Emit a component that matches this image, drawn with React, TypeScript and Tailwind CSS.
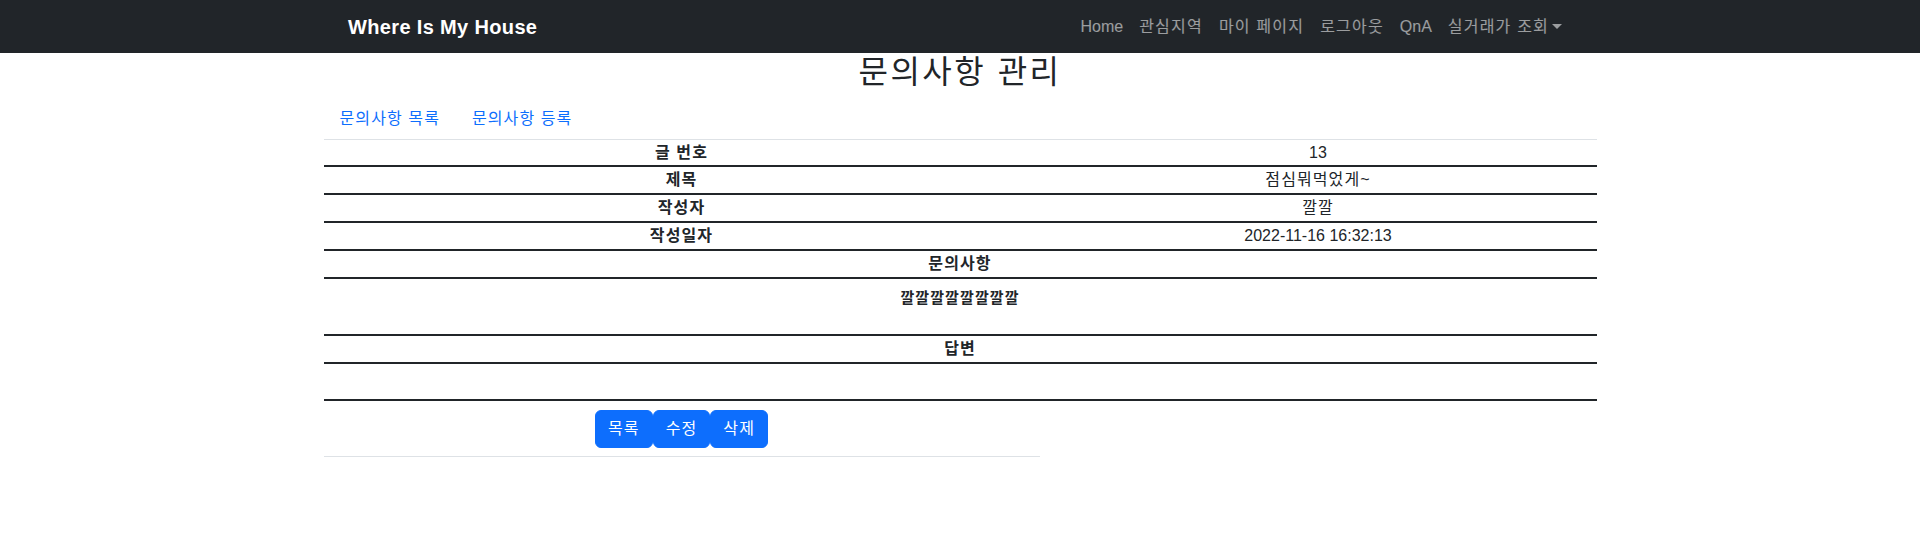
import React from "react";

const rows: { label: string; value: string; h: string; ko: boolean }[] = [
  { label: "글 번호", value: "13", h: "h-[25px]", ko: false },
  { label: "제목", value: "점심뭐먹었게~", h: "h-[26px]", ko: true },
  { label: "작성자", value: "깔깔", h: "h-[26px]", ko: true },
  { label: "작성일자", value: "2022-11-16 16:32:13", h: "h-[26px]", ko: false },
];

const navItems: { t: string; ko: boolean }[] = [
  { t: "Home", ko: false },
  { t: "관심지역", ko: true },
  { t: "마이 페이지", ko: true },
  { t: "로그아웃", ko: true },
  { t: "QnA", ko: false },
];

export default function App() {
  return (
    <div className="min-h-[545px] bg-white text-[#212529] font-['Liberation_Sans','Noto_Sans_CJK_KR',sans-serif] text-[16px] leading-6">
      <nav className="h-[53px] bg-[#212529] flex items-center justify-between pl-[348px] pr-[350px]">
        <a className="text-white text-[20px] leading-[30px] font-bold tracking-[0.35px]">Where Is My House</a>
        <ul className="flex items-center">
          {navItems.map((n) => (
            <li key={n.t} className={n.ko ? "px-2 text-white/55 leading-6 tracking-[1.2px]" : "px-2 text-white/55 leading-6"}>
              {n.t}
            </li>
          ))}
          <li className="px-2 text-white/55 leading-6 flex items-center tracking-[1.2px]">
            실거래가 조회
            <span className="inline-block w-0 h-0 ml-[3px] mb-[1px] border-t-[5px] border-t-current border-x-[5px] border-x-transparent" />
          </li>
        </ul>
      </nav>

      <main className="w-[1273px] mx-auto">
        <h2 className="text-center text-[32px] leading-[38px] font-normal mb-2 tracking-[2.5px]">문의사항 관리</h2>
        <div className="flex">
          <a className="px-4 py-2 text-[#0d6efd] tracking-[1.1px]">문의사항 목록</a>
          <a className="px-4 py-2 text-[#0d6efd] tracking-[1.1px]">문의사항 등록</a>
        </div>

        <div className="border-t border-[#dee2e6]">
          {rows.map((r) => (
            <div
              key={r.label}
              className={`grid grid-cols-[716px_557px] items-center border-b-2 border-[#212529] box-content ${r.h}`}
            >
              <div className="text-center font-bold tracking-[1.1px]">{r.label}</div>
              <div className={r.ko ? "text-center tracking-[1.1px]" : "text-center"}>{r.value}</div>
            </div>
          ))}
          <div className="h-[26px] box-content flex items-center justify-center border-b-2 border-[#212529] font-bold tracking-[1.1px]">
            문의사항
          </div>
          <div className="h-[48px] box-content border-b-2 border-[#212529] pt-[7px] text-center">
            <span className="text-[15px] font-bold tracking-[1.1px]">깔깔깔깔깔깔깔깔</span>
          </div>
          <div className="h-[26px] box-content flex items-center justify-center border-b-2 border-[#212529] font-bold tracking-[1.1px]">
            답변
          </div>
          <div className="h-[35px] box-content border-b-2 border-[#212529]" />
          <div className="w-[716px] flex justify-center pt-[9px] pb-2 border-b border-[#dee2e6]">
            <button className="bg-[#0d6efd] border border-[#0d6efd] text-white px-3 py-[6px] leading-6 rounded-[6px] tracking-[1.1px]">목록</button>
            <button className="bg-[#0d6efd] border border-[#0d6efd] text-white px-3 py-[6px] leading-6 rounded-[6px] tracking-[1.1px]">수정</button>
            <button className="bg-[#0d6efd] border border-[#0d6efd] text-white px-3 py-[6px] leading-6 rounded-[6px] tracking-[1.1px]">삭제</button>
          </div>
        </div>
      </main>
    </div>
  );
}
